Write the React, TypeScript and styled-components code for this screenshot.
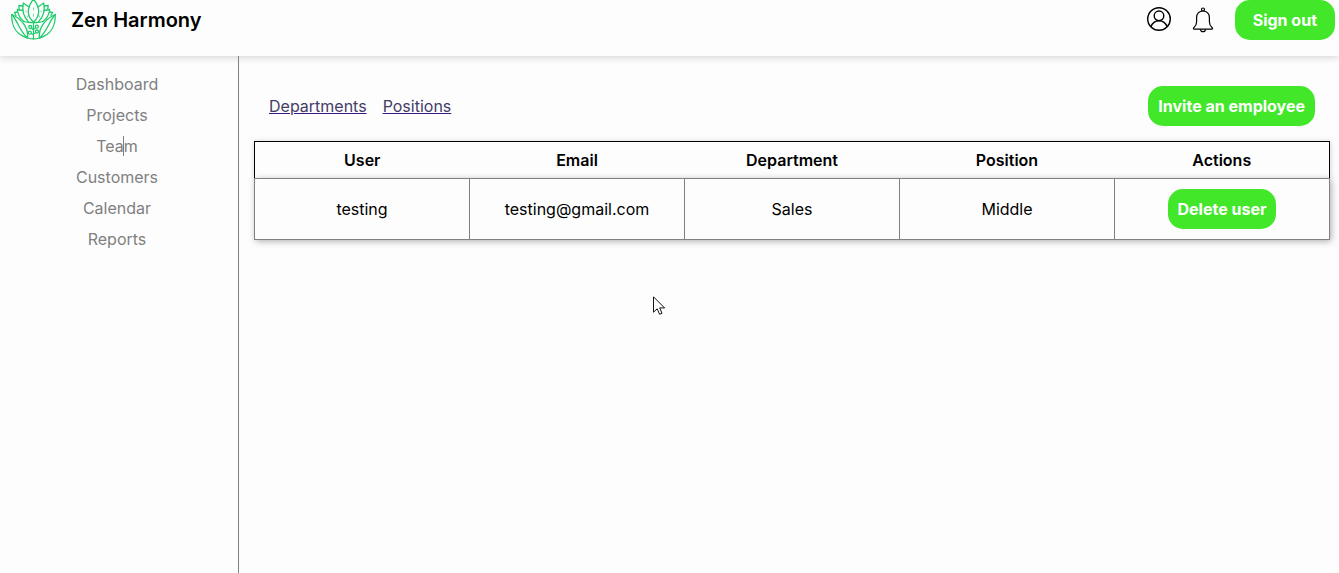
import React from "react";
import styled, { createGlobalStyle } from "styled-components";

const GlobalStyle = createGlobalStyle`
  * { box-sizing: border-box; }
  body {
    margin: 0;
    background: #fdfdfd;
    color: #000;
    font-family: Inter, "Liberation Sans", sans-serif;
    font-size: 16px;
    font-weight: 400;
    line-height: 20px;
  }
`;

const Page = styled.div`
  display: flex;
  flex-direction: column;
  min-height: 100vh;
`;

const Header = styled.header`
  display: flex;
  align-items: center;
  justify-content: space-between;
  padding: 0 4px 16px 11px;
  box-shadow: 0 2px 7px rgba(0, 0, 0, 0.15);
`;

const Brand = styled.div`
  display: flex;
  align-items: center;
  gap: 15px;
`;

const BrandName = styled.span`
  font-size: 20px;
  font-weight: 600;
`;

const HeaderActions = styled.div`
  display: flex;
  align-items: center;
  gap: 20px;
`;

const IconButton = styled.button`
  display: flex;
  padding: 0;
  border: 0;
  background: none;
  color: #000;
  cursor: pointer;
`;

const Button = styled.button<{ $wide?: boolean }>`
  height: 40px;
  padding: 0 ${({ $wide }) => ($wide ? 18 : 10)}px;
  border: 0;
  border-radius: 15px;
  background: #41e728;
  color: #fff;
  font: inherit;
  font-weight: 700;
  white-space: nowrap;
  cursor: pointer;
`;

const Body = styled.div`
  display: flex;
  flex: 1;
`;

const Sidebar = styled.nav`
  flex: 0 0 239px;
  padding: 18px 4px 0 0;
  border-right: 1px solid #808080;
`;

const NavList = styled.ul`
  display: flex;
  flex-direction: column;
  align-items: center;
  gap: 11px;
  margin: 0;
  padding: 0;
  list-style: none;
`;

const NavLink = styled.a`
  position: relative;
  display: block;
  color: #808080;
  text-decoration: none;
`;

const Caret = styled.span`
  position: absolute;
  left: 27px;
  top: 0;
  width: 1px;
  height: 20px;
  background: #808080;
`;

const Main = styled.main`
  flex: 1;
  min-width: 0;
  padding: 30px 9px 15px 15px;
`;

const Toolbar = styled.div`
  display: flex;
  align-items: center;
  justify-content: space-between;
  padding: 0 15px;
  margin-bottom: 15px;
`;

const Links = styled.div`
  display: flex;
  gap: 16px;
`;

const TextLink = styled.a`
  color: #443c66;
  text-decoration: underline #3a1a80;
`;

const Table = styled.table`
  width: 100%;
  table-layout: fixed;
  border-collapse: collapse;
  text-align: center;
`;

const HeadRow = styled.tr`
  height: 37px;
  border: 1px solid #000;
  box-shadow: 0 0 6px rgba(0, 0, 0, 0.2);
`;

const HeadCell = styled.th`
  padding: 0;
  font-weight: 600;
`;

const Row = styled.tr`
  box-shadow: 1px 1px 7px rgba(0, 0, 0, 0.35);
`;

const Cell = styled.td`
  padding: 10px;
  border: 1px solid #808080;
  background: #fdfdfd;
`;

const Pointer = styled.svg`
  position: absolute;
  left: 653px;
  top: 296px;
  pointer-events: none;
`;

const LotusLogo = () => (
  <svg width="45" height="40" viewBox="0 0 45 40" fill="none" stroke="#1fcb6b" strokeWidth="1.3" strokeLinecap="round" strokeLinejoin="round" aria-hidden="true">
    <path d="M22.500 -1C19.500 3 17.300 7 17.300 11.500C17.300 16 19.500 19.500 22.500 22C25.500 19.500 27.700 16 27.700 11.500C27.700 7 25.500 3 22.500 -1Z" />
    <path d="M18 7L12.300 3C10.800 9.500 12.500 16.500 17.500 22M27 7L32.700 3C34.200 9.500 32.500 16.500 27.500 22" />
    <path d="M11.800 10.500L6.300 9.500C6.800 14 9 18.500 13 21.500M33.200 10.500L38.700 9.500C38.200 14 36 18.500 32 21.500" />
    <path d="M11.800 6L7.800 5.500L8.300 9.500M33.200 6L37.200 5.500L36.700 9.500M6.300 12L3.500 12.500L5 15.500M38.700 12L41.500 12.500L40 15.500" />
    <path d="M13 21.500C16 22.500 19.500 22.700 22.500 22.300C25.500 22.700 29 22.500 32 21.500" />
    <path d="M.8 14.500C.3 26 5.500 35 16.500 38C18 29.500 12 19.500 .8 14.500ZM44.200 14.500C44.700 26 39.500 35 28.500 38C27 29.500 33 19.500 44.200 14.500Z" />
    <path d="M.8 14.500C6.500 20.500 8.500 31 16.500 38M44.200 14.500C38.500 20.500 36.500 31 28.500 38M16.500 38C20.500 39.200 24.500 39.200 28.500 38" />
    <path d="M22.500 22.500V39M22.500 29.500L24.500 28M22.500 34L25 32.500M22.500 30L20.500 28M22.500 35L20.500 33.500" strokeWidth="1.1" />
    <circle cx="19.300" cy="27" r="1.500" />
    <circle cx="18.800" cy="32.700" r="1.500" />
    <circle cx="25.800" cy="26.700" r="1.500" />
    <circle cx="26" cy="31.500" r="1.500" />
    <path d="M22.500 8V10M22.500 14V16M15 11V12M16.500 16V17M30 11V12M28.500 16V17" strokeWidth="1" opacity=".6" />
  </svg>
);

const ProfileIcon = () => (
  <svg width="26" height="26" viewBox="0 0 26 26" fill="none" stroke="currentColor" strokeWidth="1.4" aria-hidden="true">
    <circle cx="14" cy="12" r="11.300" />
    <circle cx="14" cy="8.800" r="4.800" />
    <path d="M5.800 20C7.300 16 10.300 13.800 14 13.800S20.700 16 22.200 20" />
  </svg>
);

const BellIcon = () => (
  <svg width="24" height="26" viewBox="0 0 24 26" fill="none" stroke="currentColor" strokeWidth="1.2" strokeLinejoin="round" aria-hidden="true">
    <circle cx="12" cy="2.500" r="1.500" />
    <path d="M12 4C8 4 5.600 6.800 5.600 10.500V14.800C5.600 17.800 4.800 19.100 3 20.500C2 21.400 2.300 22.200 3.300 22.200H20.700C21.700 22.200 22 21.400 21 20.500C19.200 19.100 18.400 17.800 18.400 14.800V10.500C18.400 6.800 16 4 12 4Z" />
    <path d="M9.500 22.300C9.700 23.800 10.600 24.700 12 24.700S14.300 23.800 14.500 22.300" />
  </svg>
);

const navItems = ["Dashboard", "Projects", "Team", "Customers", "Calendar", "Reports"];
const columns = ["User", "Email", "Department", "Position", "Actions"];
const users = [
  { name: "testing", email: "testing@gmail.com", department: "Sales", position: "Middle" },
];

export default function App() {
  return (
    <Page>
      <GlobalStyle />
      <Header>
        <Brand>
          <LotusLogo />
          <BrandName>Zen Harmony</BrandName>
        </Brand>
        <HeaderActions>
          <IconButton aria-label="Profile"><ProfileIcon /></IconButton>
          <IconButton aria-label="Notifications"><BellIcon /></IconButton>
          <Button $wide>Sign out</Button>
        </HeaderActions>
      </Header>
      <Body>
        <Sidebar>
          <NavList>
            {navItems.map((item) => (
              <li key={item}>
                <NavLink href="#">
                  {item}
                  {item === "Team" && <Caret />}
                </NavLink>
              </li>
            ))}
          </NavList>
        </Sidebar>
        <Main>
          <Toolbar>
            <Links>
              <TextLink href="#">Departments</TextLink>
              <TextLink href="#">Positions</TextLink>
            </Links>
            <Button>Invite an employee</Button>
          </Toolbar>
          <Table>
            <thead>
              <HeadRow>
                {columns.map((column) => (
                  <HeadCell key={column} scope="col">{column}</HeadCell>
                ))}
              </HeadRow>
            </thead>
            <tbody>
              {users.map((user) => (
                <Row key={user.email}>
                  <Cell>{user.name}</Cell>
                  <Cell>{user.email}</Cell>
                  <Cell>{user.department}</Cell>
                  <Cell>{user.position}</Cell>
                  <Cell><Button>Delete user</Button></Cell>
                </Row>
              ))}
            </tbody>
          </Table>
        </Main>
      </Body>
      <Pointer width="13" height="20" viewBox="0 0 13 20" fill="#fff" stroke="#111" strokeWidth="1" aria-hidden="true">
        <path d="M.5 .8V16.200L4.200 12.800L6.600 18.300L9 17.300L6.700 11.900H11.600Z" />
      </Pointer>
    </Page>
  );
}
